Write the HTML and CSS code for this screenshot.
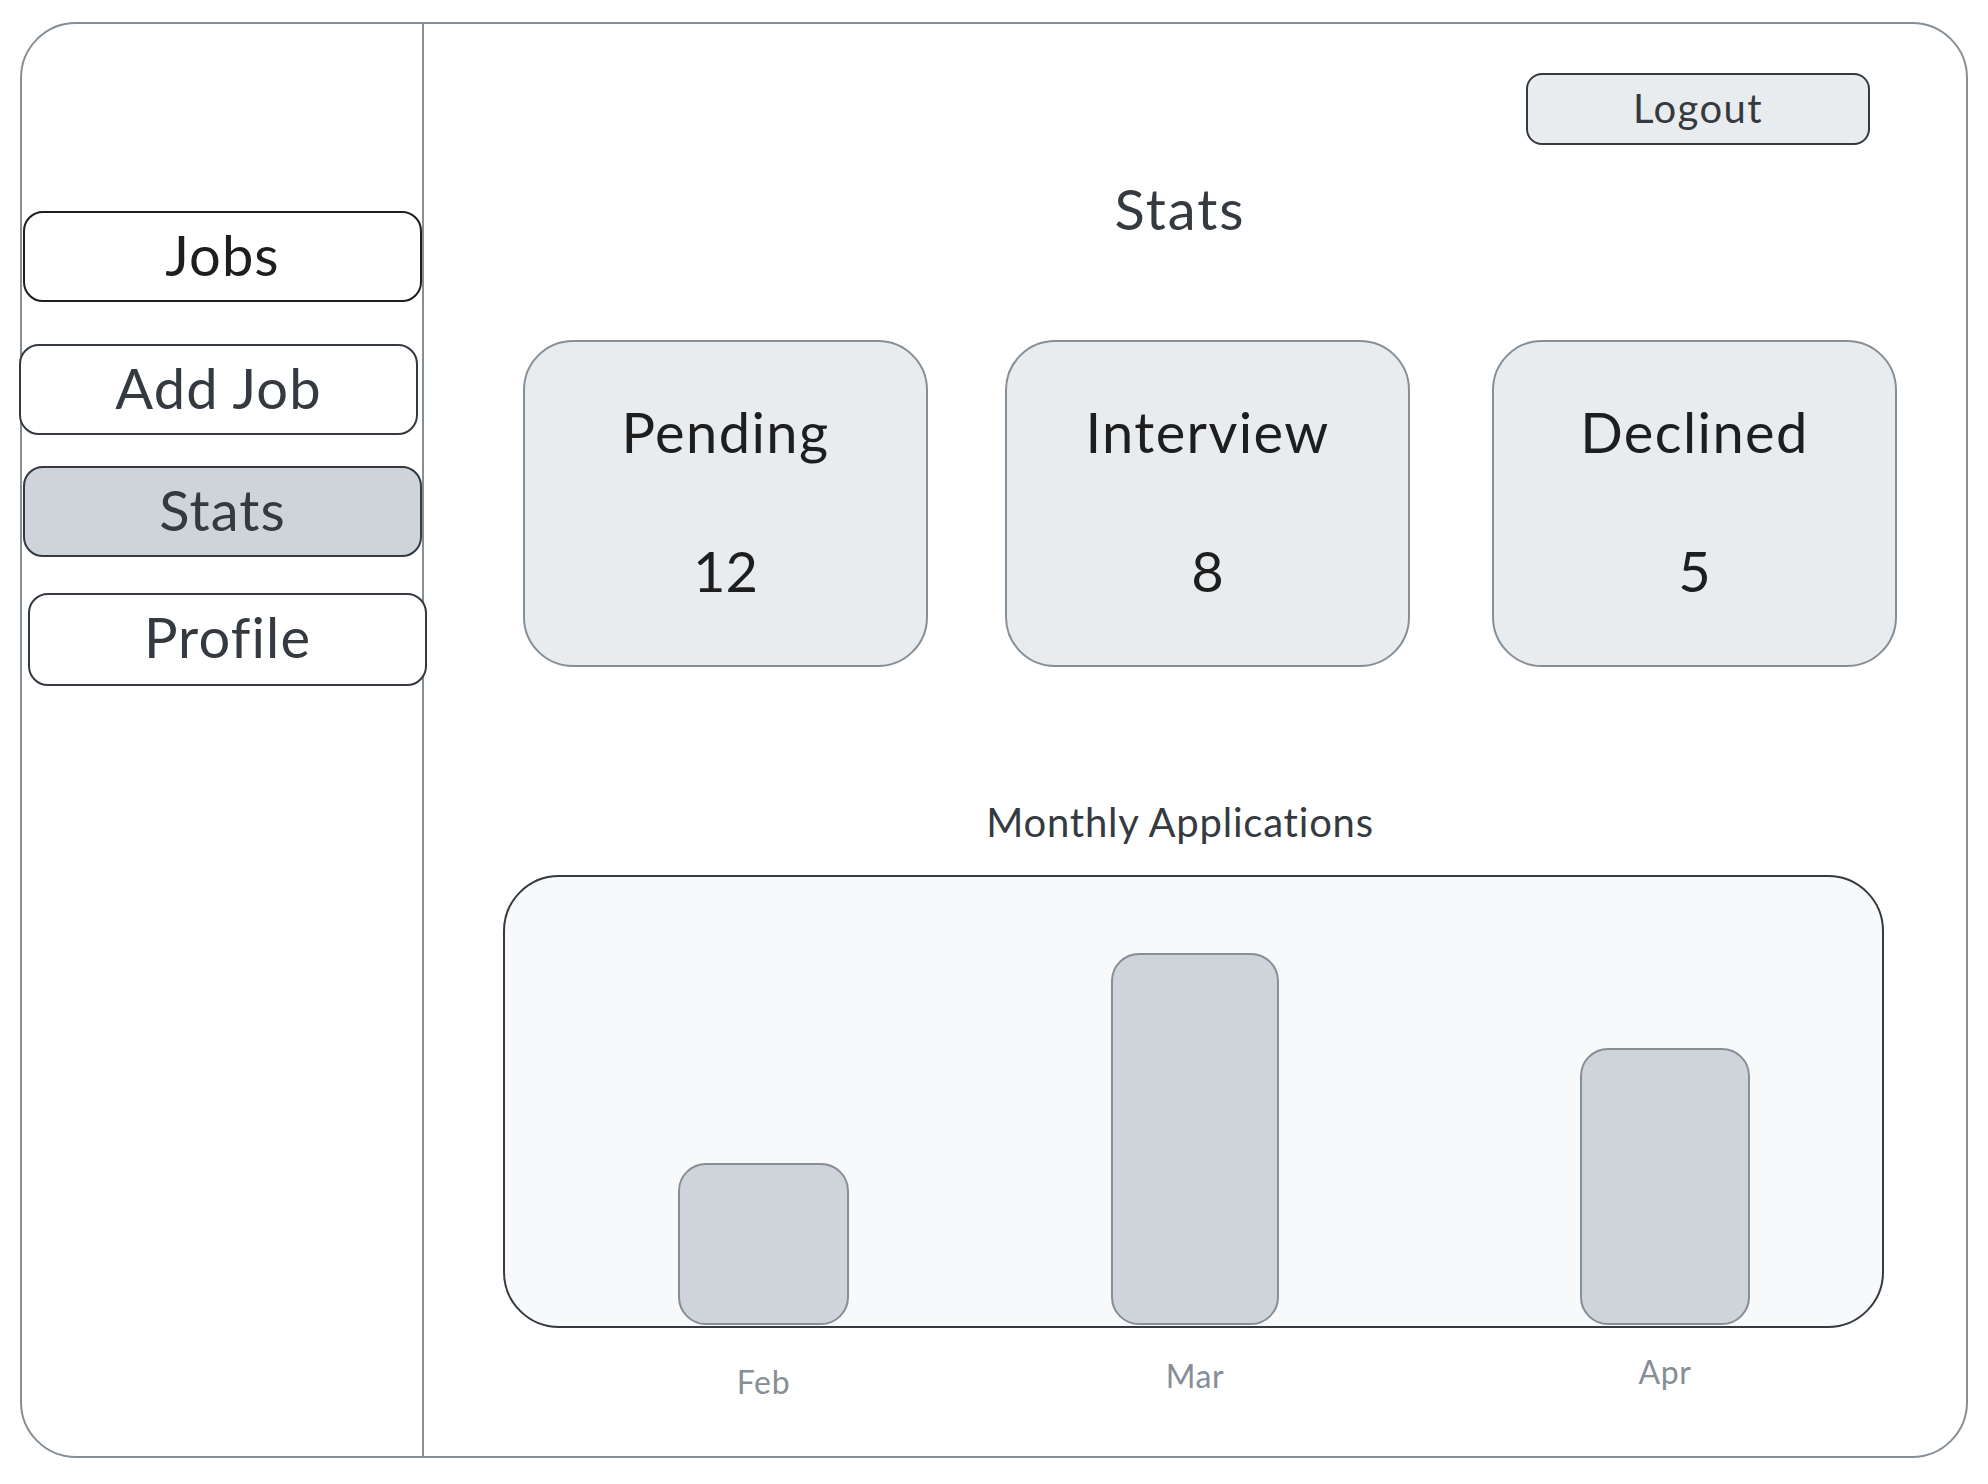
FILE: index.html
```html
<!DOCTYPE html>
<html lang="en">
<head>
<meta charset="utf-8">
<title>Stats</title>
<link rel="stylesheet" href="styles.css">
</head>
<body>
<div class="frame">
  <aside class="sidebar">
    <nav class="nav">
      <div class="nav-item nav-jobs">Jobs</div>
      <div class="nav-item nav-add">Add Job</div>
      <div class="nav-item nav-stats">Stats</div>
      <div class="nav-item nav-profile">Profile</div>
    </nav>
  </aside>
  <main class="main">
    <div class="topbar">
      <div class="logout">Logout</div>
    </div>
    <h1 class="title">Stats</h1>
    <div class="cards">
      <div class="card">
        <div class="card-label">Pending</div>
        <div class="card-value">12</div>
      </div>
      <div class="card">
        <div class="card-label">Interview</div>
        <div class="card-value">8</div>
      </div>
      <div class="card card-last">
        <div class="card-label">Declined</div>
        <div class="card-value">5</div>
      </div>
    </div>
    <h2 class="chart-title">Monthly Applications</h2>
    <div class="chart">
      <div class="bar col-feb" style="height: 162px"></div>
      <div class="bar col-mar" style="height: 372px"></div>
      <div class="bar col-apr" style="height: 277px"></div>
    </div>
    <div class="months">
      <div class="month col-feb month-feb">Feb</div>
      <div class="month col-mar month-mar">Mar</div>
      <div class="month col-apr month-apr">Apr</div>
    </div>
  </main>
</div>
</body>
</html>
```
FILE: styles.css
```css
* {
  box-sizing: border-box;
}

body {
  margin: 0;
  background: #ffffff;
  font-family: Lato, "Noto Sans", sans-serif;
  color: #343a40;
}

.frame {
  margin: 22px 0 0 20px;
  width: 1948px;
  height: 1436px;
  border: 2px solid #868e96;
  border-radius: 56px;
  display: flex;
}

/* Sidebar */
.sidebar {
  width: 402px;
  flex: none;
  border-right: 2px solid #868e96;
}

.nav {
  display: flex;
  flex-direction: column;
  padding-top: 187px;
}

.nav-item {
  width: 399px;
  height: 91px;
  border: 2px solid #343a40;
  border-radius: 20px;
  background: #ffffff;
  font-size: 56px;
  line-height: 84px;
  letter-spacing: 0.02em;
  text-align: center;
  color: #343a40;
}

.nav-jobs {
  margin-left: 1px;
  border-color: #1e1e1e;
  color: #1e1e1e;
}

.nav-add {
  margin-left: -3px;
  margin-top: 42px;
}

.nav-stats {
  margin-left: 1px;
  margin-top: 31px;
  background: #ced4da;
}

.nav-profile {
  margin-left: 6px;
  margin-top: 36px;
  height: 93px;
}

/* Main */
.main {
  flex: 1;
  display: flex;
  flex-direction: column;
  padding-top: 49px;
}

.topbar {
  display: flex;
  justify-content: flex-end;
  padding-right: 96px;
}

.logout {
  width: 344px;
  height: 72px;
  border: 2px solid #343a40;
  border-radius: 16px;
  background: #e9ecef;
  font-size: 40px;
  line-height: 66px;
  letter-spacing: 0.035em;
  text-align: center;
  color: #343a40;
}

.title {
  margin: 30px 0 0;
  padding-right: 30px;
  font-size: 56px;
  font-weight: 400;
  line-height: 67px;
  letter-spacing: 0.035em;
  text-align: center;
  color: #343a40;
}

.cards {
  display: flex;
  gap: 77px;
  margin-top: 98px;
  padding-left: 99px;
}

.card {
  width: 405px;
  height: 327px;
  border: 2px solid #868e96;
  border-radius: 50px;
  background: #e9ecef;
  padding-top: 56px;
  text-align: center;
  color: #1e1e1e;
}

.card-last {
  margin-left: 5px;
}

.card-label {
  font-size: 56px;
  line-height: 67px;
  letter-spacing: 0.025em;
}

.card-value {
  margin-top: 72px;
  font-size: 56px;
  line-height: 67px;
}

.chart-title {
  margin: 131px 0 0;
  padding-right: 30px;
  font-size: 40px;
  font-weight: 400;
  line-height: 48px;
  letter-spacing: 0.02em;
  text-align: center;
  color: #343a40;
}

.chart {
  margin-top: 29px;
  margin-left: 79px;
  width: 1381px;
  height: 453px;
  border: 2px solid #343a40;
  border-radius: 56px;
  background: #f8f9fa;
  display: flex;
  align-items: flex-end;
  padding-bottom: 1px;
}

.bar {
  border: 2px solid #868e96;
  border-radius: 28px;
  background: #ced4da;
}

.col-feb {
  width: 171px;
  margin-left: 173px;
}

.col-mar {
  width: 168px;
  margin-left: 262px;
}

.col-apr {
  width: 170px;
  margin-left: 301px;
}

.months {
  display: flex;
  align-items: flex-start;
  margin-top: 20px;
  margin-left: 81px;
}

.month {
  font-size: 32px;
  line-height: 38px;
  letter-spacing: 0.02em;
  text-align: center;
  color: #868e96;
}

.month-feb {
  margin-top: 15px;
}

.month-mar {
  margin-top: 9px;
}

.month-apr {
  margin-top: 5px;
}
```
